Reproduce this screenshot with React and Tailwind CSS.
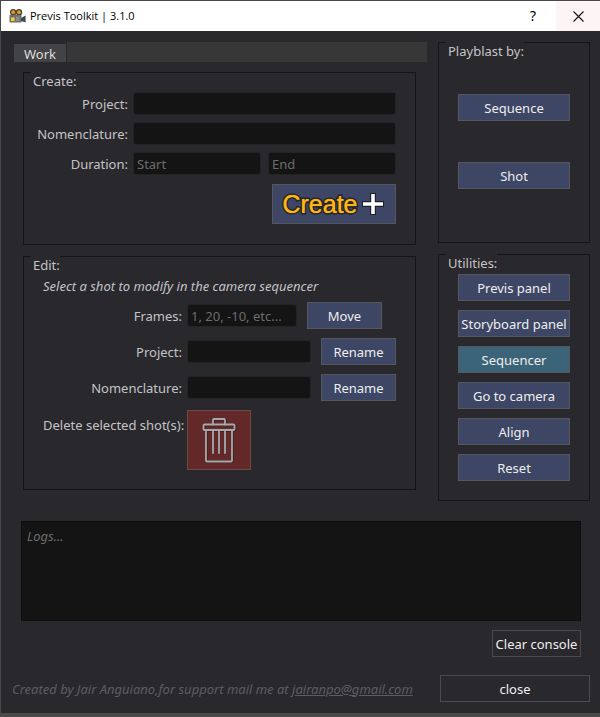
import React from "react";

const utilities = ["Previs panel", "Storyboard panel", "Sequencer", "Go to camera", "Align", "Reset"];

function Group({ title, className = "", children }) {
  return (
    <section className={`border border-[#151517] ${className}`}>
      <h2 className="-mt-px ml-[7px] w-fit bg-[#29282d] pb-0.5 pl-0.5 leading-[18px] text-[#c4c4c6]">{title}</h2>
      {children}
    </section>
  );
}

function Button({ className = "w-full", active = false, children }) {
  return (
    <button
      type="button"
      className={`h-[27px] shrink-0 border border-[#56575e] text-center text-[#eeeeee] ${
        active ? "bg-[#3c6478]" : "bg-[#3d4664]"
      } ${className}`}
    >
      {children}
    </button>
  );
}

function Field({ className = "", ...props }) {
  return (
    <input
      type="text"
      className={`h-[23px] min-w-0 rounded-[3px] border border-[#242427] bg-[#141414] px-[3px] text-[#dddddd] outline-none placeholder:text-[#6c6c6c] ${className}`}
      {...props}
    />
  );
}

function CameraIcon() {
  return (
    <svg width="17" height="14" viewBox="0 0 17 14" aria-hidden="true">
      <circle cx="4.2" cy="3.2" r="3.2" fill="#4a4338" />
      <circle cx="10" cy="3.2" r="3.2" fill="#4a4338" />
      <circle cx="4.2" cy="3.2" r="1.9" fill="#e39a1e" />
      <circle cx="10" cy="3.2" r="1.9" fill="#e39a1e" />
      <rect x="0.5" y="6" width="12" height="7.5" rx="0.6" fill="#6d706e" />
      <rect x="2" y="8.5" width="3.6" height="3.5" fill="#f2cf2b" />
      <rect x="7" y="7.5" width="3.5" height="4.5" fill="#8b8e8a" />
      <path d="M12 9 16.600 6.500v7L12 12z" fill="#45484b" />
    </svg>
  );
}

function TrashIcon() {
  return (
    <svg width="36" height="48" viewBox="0 0 36 48" fill="none" aria-hidden="true">
      <g stroke="#4b1f21" strokeWidth="2.4" strokeLinejoin="round" transform="translate(.8 .8)">
        <rect x="2.500" y="8.500" width="31" height="5.500" rx="1" />
        <path d="M5 14V45h26V14M12 8.500V3h12v5.500" />
      </g>
      <g stroke="#a3a9ad" strokeWidth="1.8" strokeLinejoin="round" strokeLinecap="round">
        <rect x="2.500" y="8.500" width="31" height="5.500" rx="1" />
        <path d="M5 14V44.500q0 1 1 1h24q1 0 1-1V14" />
        <path d="M12 8.500V4q0-1 1-1h10q1 0 1 1v4.500" />
        <path d="M12 14v23M18 14v23M24 14v23" />
      </g>
    </svg>
  );
}

function TitleBar() {
  return (
    <header className="flex h-[30px] items-center bg-white pl-2 text-black">
      <CameraIcon />
      <h1 className="ml-1 flex-1 font-['Open_Sans','Noto_Sans',sans-serif] text-[11px]">Previs Toolkit | 3.1.0</h1>
      <button type="button" aria-label="Help" className="h-full w-[46px] text-sm">
        ?
      </button>
      <button type="button" aria-label="Close window" className="flex h-full w-11 items-center justify-center bg-[#fdf5f5]">
        <svg width="11" height="11" viewBox="0 0 11 11" stroke="#111" strokeWidth="1.1" aria-hidden="true">
          <path d="M.5.5l10 10M10.500.5l-10 10" />
        </svg>
      </button>
    </header>
  );
}

function CreateGroup() {
  return (
    <Group title="Create:">
      <form className="grid grid-cols-[104px_1fr] items-center gap-x-[5px] gap-y-[7px] pb-5 pr-[19px]">
        <label htmlFor="create-project" className="text-right">Project:</label>
        <Field id="create-project" />
        <label htmlFor="create-name" className="text-right">Nomenclature:</label>
        <Field id="create-name" />
        <label htmlFor="create-start" className="text-right">Duration:</label>
        <div className="grid grid-cols-2 gap-[7px]">
          <Field id="create-start" placeholder="Start" />
          <Field aria-label="End" placeholder="End" />
        </div>
        <button
          type="button"
          className="col-span-2 mt-0.5 flex h-10 w-[124px] items-center justify-center gap-1 justify-self-end border border-[#56575e] bg-[#3d4664] pr-0.5"
        >
          <span className="font-['Liberation_Sans',Arial,sans-serif] text-[25px] leading-none text-[#ffb612] [paint-order:stroke_fill] [-webkit-text-stroke:3px_#1d1f2a] [text-shadow:0_0_1px_#ffb612]">
            Create
          </span>
          <svg width="22" height="22" viewBox="0 0 22 22" aria-hidden="true">
            <path d="M11 0v22M0 11h22" stroke="#1d1f2a" strokeWidth="6" />
            <path d="M11 1v20M1 11h20" stroke="#ffffff" strokeWidth="3.600" />
          </svg>
        </button>
      </form>
    </Group>
  );
}

function EditRow({ id, label, action, placeholder, short }) {
  return (
    <div className="flex items-center">
      <label htmlFor={id} className="mr-[5px] w-[158px] shrink-0 text-right">{label}</label>
      <Field id={id} placeholder={placeholder} className={short ? "mr-2.5 w-[110px]" : "mr-2.5 flex-1"} />
      <Button className="w-[75px]">{action}</Button>
    </div>
  );
}

function EditGroup() {
  return (
    <Group title="Edit:">
      <p className="ml-[19px] italic leading-5">Select a shot to modify in the camera sequencer</p>
      <form className="mt-1.5 flex flex-col gap-[9px] pb-[19px] pr-[19px]">
        <EditRow id="edit-frames" label="Frames:" action="Move" placeholder="1, 20, -10, etc..." short />
        <EditRow id="edit-project" label="Project:" action="Rename" />
        <EditRow id="edit-name" label="Nomenclature:" action="Rename" />
        <div className="flex">
          <span id="delete-label" className="w-[163px] shrink-0 pl-[19px] leading-[30px]">Delete selected shot(s):</span>
          <button
            type="button"
            aria-labelledby="delete-label"
            className="flex h-[60px] w-16 items-center justify-center border border-[#6a4a4d] bg-[#632828]"
          >
            <TrashIcon />
          </button>
        </div>
      </form>
    </Group>
  );
}

export default function App() {
  return (
    <div className="border-b-4 border-l border-t border-b-[#4a4a4a] border-l-[#484848] border-t-[#4b484b] bg-[#29282d] font-['Noto_Sans','Open_Sans',sans-serif] text-[13px] leading-5 text-[#c4c4c6]">
      <TitleBar />
      <main className="pb-[11px] pl-[11px] pr-2.5 pt-[11px]">
        <div className="flex gap-[11px]">
          <div className="min-w-0 flex-1">
            <div role="tablist" className="ml-0.5 flex h-5 items-end gap-px">
              <button type="button" role="tab" aria-selected="true" className="h-[18px] w-[52px] bg-[#434345] leading-5 text-[#dddddd]">
                Work
              </button>
              <div className="h-full flex-1 bg-[#373737]" />
            </div>
            <div className="flex flex-col gap-[11px] pl-[11px] pr-[11px] pt-2.5">
              <CreateGroup />
              <EditGroup />
            </div>
          </div>
          <aside className="flex w-[152px] shrink-0 flex-col gap-[11px]">
            <Group title="Playblast by:" className="pb-[53px]">
              <div className="mt-8 flex flex-col gap-[41px] px-[19px]">
                <Button>Sequence</Button>
                <Button>Shot</Button>
              </div>
            </Group>
            <Group title="Utilities:" className="pb-[19px]">
              <div className="flex flex-col gap-[9px] px-[19px]">
                {utilities.map((name) => (
                  <Button key={name} active={name === "Sequencer"}>{name}</Button>
                ))}
              </div>
            </Group>
          </aside>
        </div>
        <div className="mt-5 flex flex-col items-end gap-[9px] pl-[9px] pr-[9px]">
          <textarea
            aria-label="Logs"
            placeholder="Logs..."
            className="block h-[100px] w-full resize-none border border-[#0e0e0e] bg-[#141414] px-[5px] py-1 italic text-[#dddddd] outline-none placeholder:text-[#6c6c6c]"
          />
          <button type="button" className="h-[27px] w-[89px] border border-[#4b4b4e] text-[#eeeeee]">
            Clear console
          </button>
        </div>
        <footer className="mt-[18px] flex items-center justify-between">
          <p className="italic text-[#5d5d60]">
            Created by Jair Anguiano,for support mail me at{" "}
            <a href="mailto:jairanpo@gmail.com" className="underline">jairanpo@gmail.com</a>
          </p>
          <button type="button" className="h-[27px] w-[150px] shrink-0 border border-[#4b4b4e] text-[#eeeeee]">
            close
          </button>
        </footer>
      </main>
    </div>
  );
}
